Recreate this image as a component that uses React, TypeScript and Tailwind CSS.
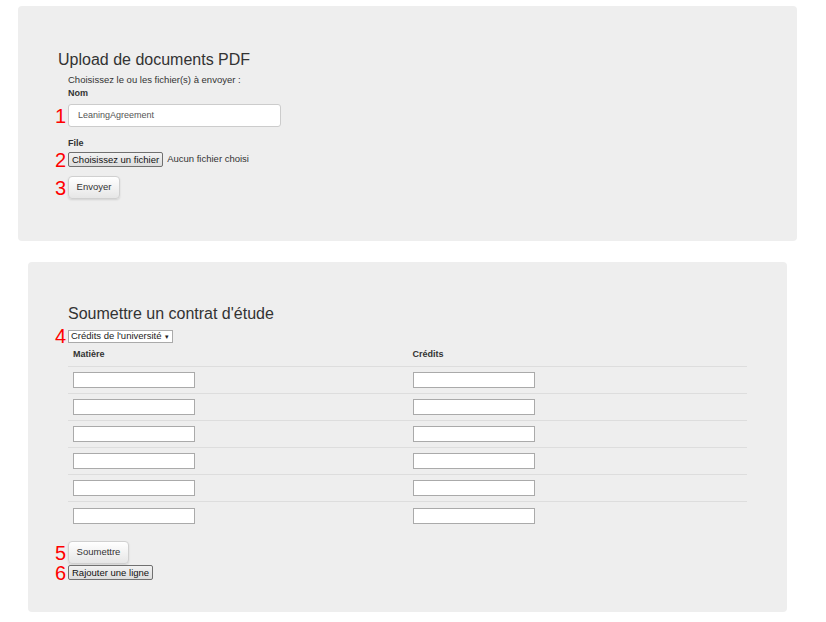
import React from 'react'

const font = { fontFamily: '"Liberation Sans", Arial, sans-serif' }

const Num: React.FC<{ n: number }> = ({ n }) => (
  <span className="-ml-[14px] h-[14px] w-[14px] pr-[2px] text-right text-[20px] leading-[14px] text-[#ff0000]">{n}</span>
)

const NativeButton: React.FC<{ label: string }> = ({ label }) => (
  <button className="h-[15px] rounded-[2px] border border-[#707070] bg-gradient-to-b from-[#f2f2f2] to-[#dddddd] px-[3px] text-[9.5px] leading-none text-[#111]">
    {label}
  </button>
)

const SoftButton: React.FC<{ label: string; w: string }> = ({ label, w }) => (
  <button
    className={`h-[23px] ${w} rounded-[4px] border border-[#d0d0d0] bg-gradient-to-b from-white to-[#e6e6e6] text-[9.5px] text-[#333] shadow-[0_1px_2px_rgba(0,0,0,0.12)]`}
  >
    {label}
  </button>
)

const Cell: React.FC = () => (
  <div className="h-[16px] w-[122px] border border-[#aaaaaa] bg-white" />
)

const UploadPanel: React.FC = () => (
  <section className="ml-[18px] mt-[6px] h-[235px] w-[779px] rounded-[4px] bg-[#eeeeee] pl-[40px] pt-[44px]">
    <h2 className="text-[16px] leading-[20px] text-[#333]">Upload de documents PDF</h2>
    <div className="pl-[10px]">
      <p className="mt-[4px] text-[9.5px] leading-[12px] text-[#333]">Choisissez le ou les fichier(s) à envoyer :</p>
      <p className="mt-[1px] text-[9px] font-bold leading-[12px] text-[#333]">Nom</p>
      <div className="mt-[5px] flex items-center">
        <Num n={1} />
        <div className="flex h-[23px] w-[213px] items-center rounded-[3px] border border-[#cccccc] bg-white pl-[9px] text-[9px] text-[#555]">
          LeaningAgreement
        </div>
      </div>
      <p className="mt-[10px] text-[9px] font-bold leading-[12px] text-[#333]">File</p>
      <div className="mt-[3px] flex items-center">
        <Num n={2} />
        <NativeButton label="Choisissez un fichier" />
        <span className="ml-[4px] text-[9.5px] text-[#333]">Aucun fichier choisi</span>
      </div>
      <div className="mt-[9px] flex items-center">
        <Num n={3} />
        <SoftButton label="Envoyer" w="w-[52px]" />
      </div>
    </div>
  </section>
)

const ContractPanel: React.FC = () => (
  <section className="ml-[28px] mt-[21px] h-[350px] w-[759px] rounded-[4px] bg-[#eeeeee] pl-[40px] pt-[42px]">
    <h2 className="text-[16px] leading-[20px] text-[#333]">Soumettre un contrat d'étude</h2>
    <div className="mt-[5px] flex items-center">
      <Num n={4} />
      <div className="flex h-[13px] items-center border border-[#aaaaaa] bg-white pl-[2px] pr-[3px] text-[9.5px] leading-none text-[#222]">
        Crédits de l'université <span className="ml-[3px] text-[7px]">▾</span>
      </div>
    </div>
    <div className="w-[679px]">
      <div className="grid h-[24px] grid-cols-2 items-center border-b border-[#dddddd] text-[9px] font-bold text-[#333]">
        <span className="pl-[5px]">Matière</span>
        <span className="pl-[5px]">Crédits</span>
      </div>
      {[0, 1, 2, 3, 4, 5].map(i => (
        <div key={i} className={`grid h-[27px] grid-cols-2 items-center ${i < 5 ? 'border-b border-[#dddddd]' : ''}`}>
          <div className="pl-[5px]"><Cell /></div>
          <div className="pl-[5px]"><Cell /></div>
        </div>
      ))}
    </div>
    <div className="mt-[12px] flex items-center">
      <Num n={5} />
      <SoftButton label="Soumettre" w="w-[61px]" />
    </div>
    <div className="mt-[1px] flex items-center">
      <Num n={6} />
      <NativeButton label="Rajouter une ligne" />
    </div>
  </section>
)

export default function App() {
  return (
    <div className="h-[622px] w-[826px] bg-white" style={font}>
      <UploadPanel />
      <ContractPanel />
    </div>
  )
}
